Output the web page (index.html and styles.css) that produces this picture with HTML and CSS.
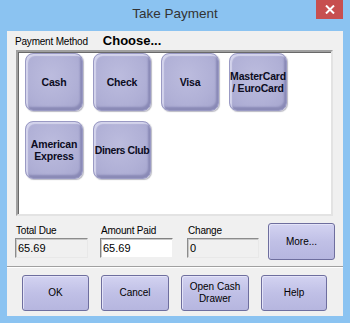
FILE: index.html
```html
<!DOCTYPE html>
<html lang="en">
<head>
  <meta charset="UTF-8">
  <title>Take Payment</title>
  <link rel="stylesheet" href="styles.css">
</head>
<body>
  <div class="window">
    <div class="titlebar">
      <div class="title">Take Payment</div>
      <div class="close">
        <svg width="10" height="9" viewBox="0 0 10 9"><path d="M1 0.5 L9 8.5 M9 0.5 L1 8.5" stroke="#fff" stroke-width="2"/></svg>
      </div>
    </div>
    <div class="client">
      <div class="head">
        <span class="label">Payment Method</span>
        <span class="choose">Choose...</span>
      </div>
      <div class="panel">
        <div class="pay-btn">Cash</div>
        <div class="pay-btn">Check</div>
        <div class="pay-btn">Visa</div>
        <div class="pay-btn">MasterCard / EuroCard</div>
        <div class="pay-btn">American Express</div>
        <div class="pay-btn nowrap">Diners Club</div>
      </div>
      <div class="fields">
        <div class="field f-total">
          <span class="label">Total Due</span>
          <div class="box">65.69</div>
        </div>
        <div class="field f-paid">
          <span class="label">Amount Paid</span>
          <div class="box white">65.69</div>
        </div>
        <div class="field f-change">
          <span class="label">Change</span>
          <div class="box">0</div>
        </div>
        <div class="btn more">More...</div>
      </div>
      <div class="actions">
        <div class="btn">OK</div>
        <div class="btn">Cancel</div>
        <div class="btn">Open Cash<br>Drawer</div>
        <div class="btn">Help</div>
      </div>
    </div>
  </div>
</body>
</html>
```
FILE: styles.css
```css
body {
  margin: 0;
  background: #8bc3f1;
}

.window {
  width: 350px;
  height: 323px;
  background: #8bc3f1;
  font-family: "Liberation Sans", Arial, sans-serif;
}

.titlebar {
  height: 31px;
  display: flex;
  position: relative;
}

.title {
  flex: 1;
  text-align: center;
  font-size: 13.5px;
  color: #333;
  padding-top: 6px;
}

.close {
  position: absolute;
  top: 0;
  left: 316px;
  width: 27px;
  height: 19px;
  background: #c74f4f;
  display: flex;
  align-items: center;
  justify-content: center;
}

.client {
  margin: 0 7px;
  height: 285px;
  background: #f0f0f0;
  display: flex;
  flex-direction: column;
}

.label {
  font-size: 10px;
  color: #000;
  letter-spacing: -0.2px;
}

.head {
  height: 19px;
  display: flex;
  align-items: baseline;
  padding-left: 8px;
  padding-top: 2px;
  box-sizing: border-box;
}

.choose {
  font-size: 13px;
  font-weight: bold;
  margin-left: 15px;
  color: #000;
}

.panel {
  margin-left: 9px;
  width: 317px;
  height: 166px;
  box-sizing: border-box;
  background: #fff;
  border: 2px solid;
  border-color: #a0a0a0 #e3e3e3 #e3e3e3 #a0a0a0;
  box-shadow: inset 1px 1px 0 #696969;
  padding: 1px 0 0 7px;
  display: grid;
  grid-template-columns: repeat(4, 58px);
  grid-auto-rows: 58px;
  gap: 10px;
  align-content: start;
}

.pay-btn {
  box-sizing: border-box;
  border-radius: 8px;
  border: 1px solid #9a9ac4;
  background: radial-gradient(ellipse at 45% 40%, #bcbcde 0%, #b0b0d6 60%, #a4a4cd 100%);
  box-shadow: inset 2px 2px 1px #d4d4ec, inset -2px -3px 2px #8a8ab6, 1px 1px 1px rgba(60, 60, 90, 0.35);
  display: flex;
  align-items: center;
  justify-content: center;
  text-align: center;
  font-size: 10.5px;
  font-weight: bold;
  color: #0c0c1e;
  line-height: 12px;
  letter-spacing: -0.2px;
}

.pay-btn.nowrap {
  white-space: nowrap;
  letter-spacing: -0.4px;
}

.fields {
  display: flex;
  padding-left: 8px;
  margin-top: 7px;
  height: 37px;
}

.field {
  display: flex;
  flex-direction: column;
}

.field .label {
  height: 15px;
  padding-top: 2px;
  box-sizing: border-box;
  padding-left: 1px;
}

.f-total { width: 73px; margin-right: 12px; }
.f-paid { width: 73px; margin-right: 14px; }
.f-change { width: 72px; margin-right: 9px; }

.box {
  height: 20px;
  box-sizing: border-box;
  border: 1px solid;
  border-color: #8c8c8c #e8e8e8 #e8e8e8 #8c8c8c;
  box-shadow: inset 1px 1px 0 #c8c8c8;
  font-size: 11px;
  padding: 3px 0 0 2px;
  color: #000;
}

.box.white {
  background: #fff;
  border-color: #828282 #f0f0f0 #f0f0f0 #828282;
}

.btn {
  box-sizing: border-box;
  border: 1px solid #6e6e9e;
  border-radius: 3px;
  background: linear-gradient(#d3d3f1, #c0c0e6 50%, #b6b6df);
  box-shadow: inset 1px 1px 0 #e4e4f8;
  display: flex;
  align-items: center;
  justify-content: center;
  text-align: center;
  font-size: 10px;
  line-height: 12px;
  color: #000;
}

.more {
  width: 67px;
  height: 37px;
}

.actions {
  margin-top: 6px;
  border-top: 1px solid #a0a0a0;
  box-shadow: inset 0 1px 0 #fff;
  padding: 8px 0 0 15px;
  display: flex;
  gap: 12px;
}

.actions .btn {
  width: 68px;
  height: 36px;
}

.actions .btn:nth-child(1) { width: 67px; }
.actions .btn:nth-child(4) { width: 66px; }
```
